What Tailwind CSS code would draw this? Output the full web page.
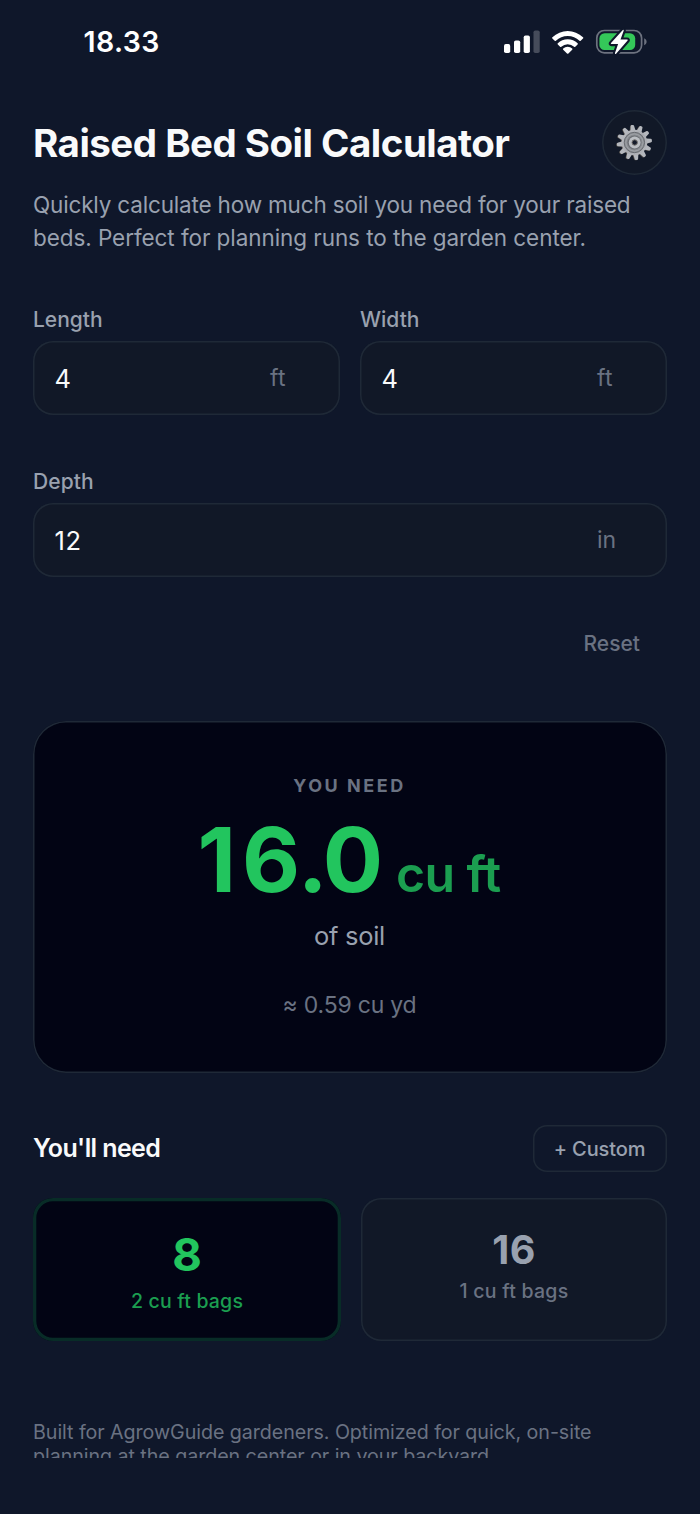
<!DOCTYPE html>
<html lang="en">
<head>
<meta charset="utf-8">
<meta name="viewport" content="width=device-width, initial-scale=1">
<title>Raised Bed Soil Calculator</title>
<script src="https://cdn.jsdelivr.net/npm/@tailwindcss/browser@4"></script>
</head>
<body class="h-[1514px] overflow-hidden bg-[#0f172a] font-['Inter',sans-serif] text-gray-400">
<div class="flex h-[84px] items-center justify-between pl-[83.5px] pr-[52px]">
  <span class="pt-px text-[28.5px] leading-none font-semibold tracking-[0.4px] text-white">18.33</span>
  <svg class="h-[30px] w-[146px]" viewBox="502 26.5 146 30" fill="none">
    <g fill="#fff">
      <rect x="504" y="43.6" width="6.2" height="9" rx="1.8"/>
      <rect x="514" y="40" width="6.2" height="12.6" rx="1.8"/>
      <rect x="523.7" y="35" width="6.2" height="17.6" rx="1.8"/>
      <rect x="533.5" y="30" width="6.2" height="22.6" rx="1.8" opacity=".23"/>
      <path d="M552.4 36.8a21.9 21.9 0 0 1 30.6 0q.6.6 0 1.2l-2.3 2.3q-.6.6-1.2 0a16.9 16.9 0 0 0-23.6 0q-.6.6-1.2 0l-2.3-2.3q-.6-.6 0-1.2z"/>
      <path d="M557.8 42.8a14.2 14.2 0 0 1 19.8 0q.6.6 0 1.2l-2.3 2.2q-.6.6-1.2 0a9.3 9.3 0 0 0-12.8 0q-.6.6-1.2 0l-2.3-2.2q-.6-.6 0-1.2z"/>
      <path d="M563.2 48.1a6.6 6.6 0 0 1 9 0q.6.6 0 1.2l-3.8 3.7q-.7.7-1.4 0l-3.8-3.7q-.6-.6 0-1.2z"/>
    </g>
    <rect x="596.8" y="30" width="44.8" height="22.4" rx="7.6" stroke="#6d727f" stroke-width="1.7"/>
    <path d="M644.2 37.8c3.2 1.4 3.2 5.6 0 7z" fill="#6d727f"/>
    <rect x="599.4" y="32.8" width="35.8" height="16.8" rx="5.2" fill="#34c759"/>
    <path d="M622.8 29.4 611 42.6q-.6 1 .5 1h6.6l-3.1 9q-.2 1.6 1.1.7l11.5-13.2q.6-1-.5-1h-6.6l3.2-8.9q.2-1.6-.9-.8z" fill="#fff" stroke="#0f172a" stroke-width="4.2" stroke-linejoin="round" paint-order="stroke"/>
  </svg>
</div>

<main class="flex h-[1374px] flex-col overflow-hidden px-[33px] pt-[26px]">
  <header class="flex h-[65px] shrink-0 items-center justify-between">
    <h1 class="pt-[2px] text-[38.5px] leading-none font-bold tracking-[-0.52px] whitespace-nowrap text-gray-50">Raised Bed Soil Calculator</h1>
    <button class="flex size-[65px] items-center justify-center rounded-full bg-[#111827] inset-ring-[1.5px] inset-ring-[#1f2937]" aria-label="Settings">
      <svg class="size-[38px]" viewBox="-18.4 -18.5 38 38">
        <defs>
          <linearGradient id="metal" x1="0" y1="0" x2="1" y2="1"><stop offset="0" stop-color="#b9bbc0"/><stop offset=".5" stop-color="#a9abb1"/><stop offset="1" stop-color="#b4b6bb"/></linearGradient>
          <g id="teeth">
            <path id="tooth" d="M-2.6-11.5-1.7-16.7Q-1.5-17.6-.6-17.6H.6Q1.5-17.6 1.7-16.7L2.6-11.5z"/>
            <use href="#tooth" transform="rotate(30)"/><use href="#tooth" transform="rotate(60)"/><use href="#tooth" transform="rotate(90)"/><use href="#tooth" transform="rotate(120)"/><use href="#tooth" transform="rotate(150)"/><use href="#tooth" transform="rotate(180)"/><use href="#tooth" transform="rotate(210)"/><use href="#tooth" transform="rotate(240)"/><use href="#tooth" transform="rotate(270)"/><use href="#tooth" transform="rotate(300)"/><use href="#tooth" transform="rotate(330)"/>
          </g>
        </defs>
        <g transform="translate(-.7 .3) rotate(-7)" fill="#55504c"><use href="#teeth"/><circle r="12.8"/></g>
        <g transform="rotate(-7)" fill="#b4b7bd"><use href="#teeth"/></g>
        <circle r="12.8" fill="url(#metal)"/>
        <circle r="10.2" fill="#8a8d92" stroke="#62656b" stroke-width=".9"/>
        <circle r="8.6" fill="none" stroke="#a2a5aa" stroke-width=".9"/>
        <circle r="7" fill="#6d7076"/>
        <circle cx=".3" r="5.9" fill="#bcbfc4"/>
        <circle cx=".3" r="2.7" fill="#161c2b" stroke="#74716e" stroke-width="1"/>
      </svg>
    </button>
  </header>

  <p class="mt-[14px] h-[65px] shrink-0 text-[22.5px] leading-[32.5px] whitespace-nowrap"><span class="tracking-[-0.17px]">Quickly calculate how much soil you need for your raised</span><br><span class="tracking-[-0.07px]">beds. Perfect for planning runs to the garden center.</span></p>

  <section class="mt-[54px] grid shrink-0 grid-cols-2 gap-x-5 gap-y-[55px] text-[21px] leading-6 font-medium">
    <div>
      <div>Length</div>
      <div class="mt-[9px] flex h-[74px] items-center justify-between rounded-[20px] bg-[#111827] pr-[27px] pl-[21.5px] font-normal inset-ring-[1.5px] inset-ring-[#1f2937]">
        <span class="pt-px text-[25.5px] text-gray-50">4</span><span class="w-[43px] text-[23px] tracking-[0.3px] text-gray-500">ft</span>
      </div>
    </div>
    <div>
      <div>Width</div>
      <div class="mt-[9px] flex h-[74px] items-center justify-between rounded-[20px] bg-[#111827] pr-[27px] pl-[21.5px] font-normal inset-ring-[1.5px] inset-ring-[#1f2937]">
        <span class="pt-px text-[25.5px] text-gray-50">4</span><span class="w-[43px] text-[23px] tracking-[0.3px] text-gray-500">ft</span>
      </div>
    </div>
    <div class="col-span-2">
      <div class="tracking-[0.1px]">Depth</div>
      <div class="mt-[9px] flex h-[74px] items-center justify-between rounded-[20px] bg-[#111827] pr-[27px] pl-[21.5px] font-normal inset-ring-[1.5px] inset-ring-[#1f2937]">
        <span class="pt-px text-[25.5px] tracking-[0.6px] text-gray-50">12</span><span class="w-[43px] text-[23px] text-gray-500">in</span>
      </div>
    </div>
  </section>

  <button class="mt-[55px] mr-[27px] shrink-0 self-end text-[21px] leading-6 font-medium text-gray-500">Reset</button>

  <section class="mt-[65px] flex h-[352px] shrink-0 flex-col items-center rounded-[33px] bg-[#020414] pt-[53px] inset-ring-[1.5px] inset-ring-[#1f2937]">
    <div class="mr-px text-[18px] leading-6 font-bold tracking-[2.5px] text-gray-500">YOU NEED</div>
    <div class="mt-[17px] flex h-[90px] items-baseline leading-[90px] whitespace-nowrap">
      <span class="-ml-[2px] text-[89.5px] font-bold text-[#22c55e]"><span class="tracking-[6px]">1</span><span class="tracking-[-2.4px]">6</span><span class="tracking-[-5px]">.</span>0</span><span class="ml-[13px] text-[50px] font-semibold tracking-[-0.6px] text-[#1b9e50]">cu ft</span>
    </div>
    <div class="mt-[15px] mr-px text-[25.5px] leading-8 tracking-[-0.3px]">of soil</div>
    <div class="mt-[37px] mr-px text-[23px] leading-8 tracking-[-0.21px] text-gray-500">≈ 0.59 cu yd</div>
  </section>

  <div class="mt-[52px] flex h-[46.5px] shrink-0 items-center justify-between">
    <h2 class="text-[25px] leading-none font-semibold tracking-[-0.6px] text-gray-50">You'll need</h2>
    <button class="flex h-full w-[134px] items-center justify-center rounded-[14px] pt-px pr-px text-[20px] font-medium tracking-[-0.12px] inset-ring-[1.5px] inset-ring-[#1f2937]">+ Custom</button>
  </div>

  <section class="mt-[26.5px] flex h-[143px] shrink-0 justify-between text-center text-[19.5px] font-medium">
    <div class="w-[308px] rounded-[20px] bg-[#020414] pt-[33px] inset-ring-[3.3px] inset-ring-[#082c27]">
      <div class="text-[45.5px] leading-[48px] font-bold text-[#22c55e]">8</div>
      <div class="mt-[10px] leading-6 tracking-[0.2px] text-[#1b9e50]">2 cu ft bags</div>
    </div>
    <div class="w-[306px] rounded-[20px] bg-[#111827] pt-[32px] inset-ring-[1.5px] inset-ring-[#1f2937]">
      <div class="text-[39.5px] leading-10 font-bold tracking-[0.5px]">16</div>
      <div class="mt-[9px] leading-6 tracking-[0.24px] text-gray-500">1 cu ft bags</div>
    </div>
  </section>

  <footer class="mt-[80px] shrink-0 text-[19.7px] leading-[23.5px] tracking-[-0.07px] whitespace-nowrap text-gray-500">Built for AgrowGuide gardeners. Optimized for quick, on-site<br>planning at the garden center or in your backyard.</footer>
</main>
</body>
</html>
